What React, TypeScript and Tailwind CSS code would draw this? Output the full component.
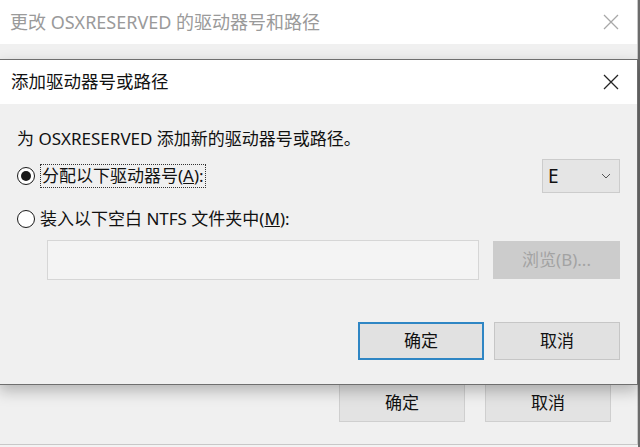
import React from "react";

const font = { fontFamily: '"Noto Sans", "Noto Sans CJK SC", sans-serif' };

function XIcon({ color }: { color: string }) {
  return (
    <svg width="16" height="16" viewBox="0 0 16 16" fill="none">
      <path d="M1 1 L15 15 M15 1 L1 15" stroke={color} strokeWidth="1.3" />
    </svg>
  );
}

function Radio({ checked }: { checked: boolean }) {
  return (
    <div className="w-[18px] h-[18px] rounded-full border-[1.5px] border-[#1a1a1a] bg-white flex items-center justify-center shrink-0">
      {checked && <div className="w-[10px] h-[10px] rounded-full bg-[#1a1a1a]" />}
    </div>
  );
}

export default function App() {
  return (
    <div className="relative w-[640px] h-[447px] overflow-hidden bg-[#f3f3f3] text-[17px] text-[#111]" style={font}>
      {/* right-side desktop strip */}
      <div className="absolute right-0 top-0 w-[2px] h-full bg-[#6b6b6b]" />
      {/* background dialog */}
      <div className="absolute left-0 top-0 w-[638px] h-[445px] bg-[#f0f0f0] border-r border-b border-[#c8c8c8] flex flex-col">
        <div className="h-[44px] bg-white flex items-center justify-between pl-[10px] pr-[18px] shrink-0">
          <span className="text-[#9a9a9a] text-[18px] leading-none">更改 OSXRESERVED 的驱动器号和路径</span>
          <XIcon color="#a8a8a8" />
        </div>
        <div className="flex-1" />
        <div className="flex justify-end gap-[20px] pr-[26px] pb-[22px]">
          <div className="w-[126px] h-[38px] bg-[#e3e3e3] border border-[#cfcfcf] flex items-center justify-center">确定</div>
          <div className="w-[126px] h-[38px] bg-[#e3e3e3] border border-[#cfcfcf] flex items-center justify-center">取消</div>
        </div>
      </div>

      {/* front dialog */}
      <div className="absolute left-[-1px] top-[59px] w-[639px] h-[326px] bg-[#f0f0f0] border border-[#6f6f6f] shadow-[0_6px_14px_rgba(0,0,0,0.25)] flex flex-col">
        <div className="h-[44px] bg-white flex items-center justify-between pl-[11px] pr-[18px] shrink-0">
          <span className="leading-none text-[17.5px] text-[#111]">添加驱动器号或路径</span>
          <XIcon color="#222" />
        </div>
        <div className="flex flex-col pl-[17px] pr-[17px]">
          <div className="mt-[24px] leading-[22px] h-[22px]">为 OSXRESERVED 添加新的驱动器号或路径。</div>
          <div className="mt-[9px] flex items-center h-[34px]">
            <Radio checked />
            <span className="ml-[5px] border border-dotted border-[#333] px-[1px] leading-[22px]">
              分配以下驱动器号(<span className="underline">A</span>):
            </span>
            <div className="flex-1" />
            <div className="w-[78px] h-[34px] bg-[#e5e5e5] border border-[#cccccc] flex items-center justify-between pl-[5px] pr-[8px]">
              <span className="text-[19px] leading-none">E</span>
              <svg width="10" height="6" viewBox="0 0 10 6" fill="none">
                <path d="M1 1 L5 5 L9 1" stroke="#555" strokeWidth="1" />
              </svg>
            </div>
          </div>
          <div className="mt-[15px] flex items-center h-[22px]">
            <Radio checked={false} />
            <span className="ml-[5px] leading-[22px]">
              装入以下空白 NTFS 文件夹中(<span className="underline">M</span>):
            </span>
          </div>
          <div className="mt-[10px] flex items-center pl-[30px]">
            <div className="w-[432px] h-[40px] bg-[#f4f4f4] border border-[#d6d6d6]" />
            <div className="flex-1" />
            <div className="w-[127px] h-[38px] bg-[#cccccc] flex items-center justify-center text-[#a3a3a3]">浏览(B)...</div>
          </div>
          <div className="mt-[42px] flex justify-end gap-[10px]">
            <div className="w-[126px] h-[38px] bg-[#e1e1e1] border-2 border-[#2f86c4] flex items-center justify-center">确定</div>
            <div className="w-[126px] h-[38px] bg-[#e1e1e1] border border-[#c6c6c6] flex items-center justify-center">取消</div>
          </div>
        </div>
      </div>
    </div>
  );
}
